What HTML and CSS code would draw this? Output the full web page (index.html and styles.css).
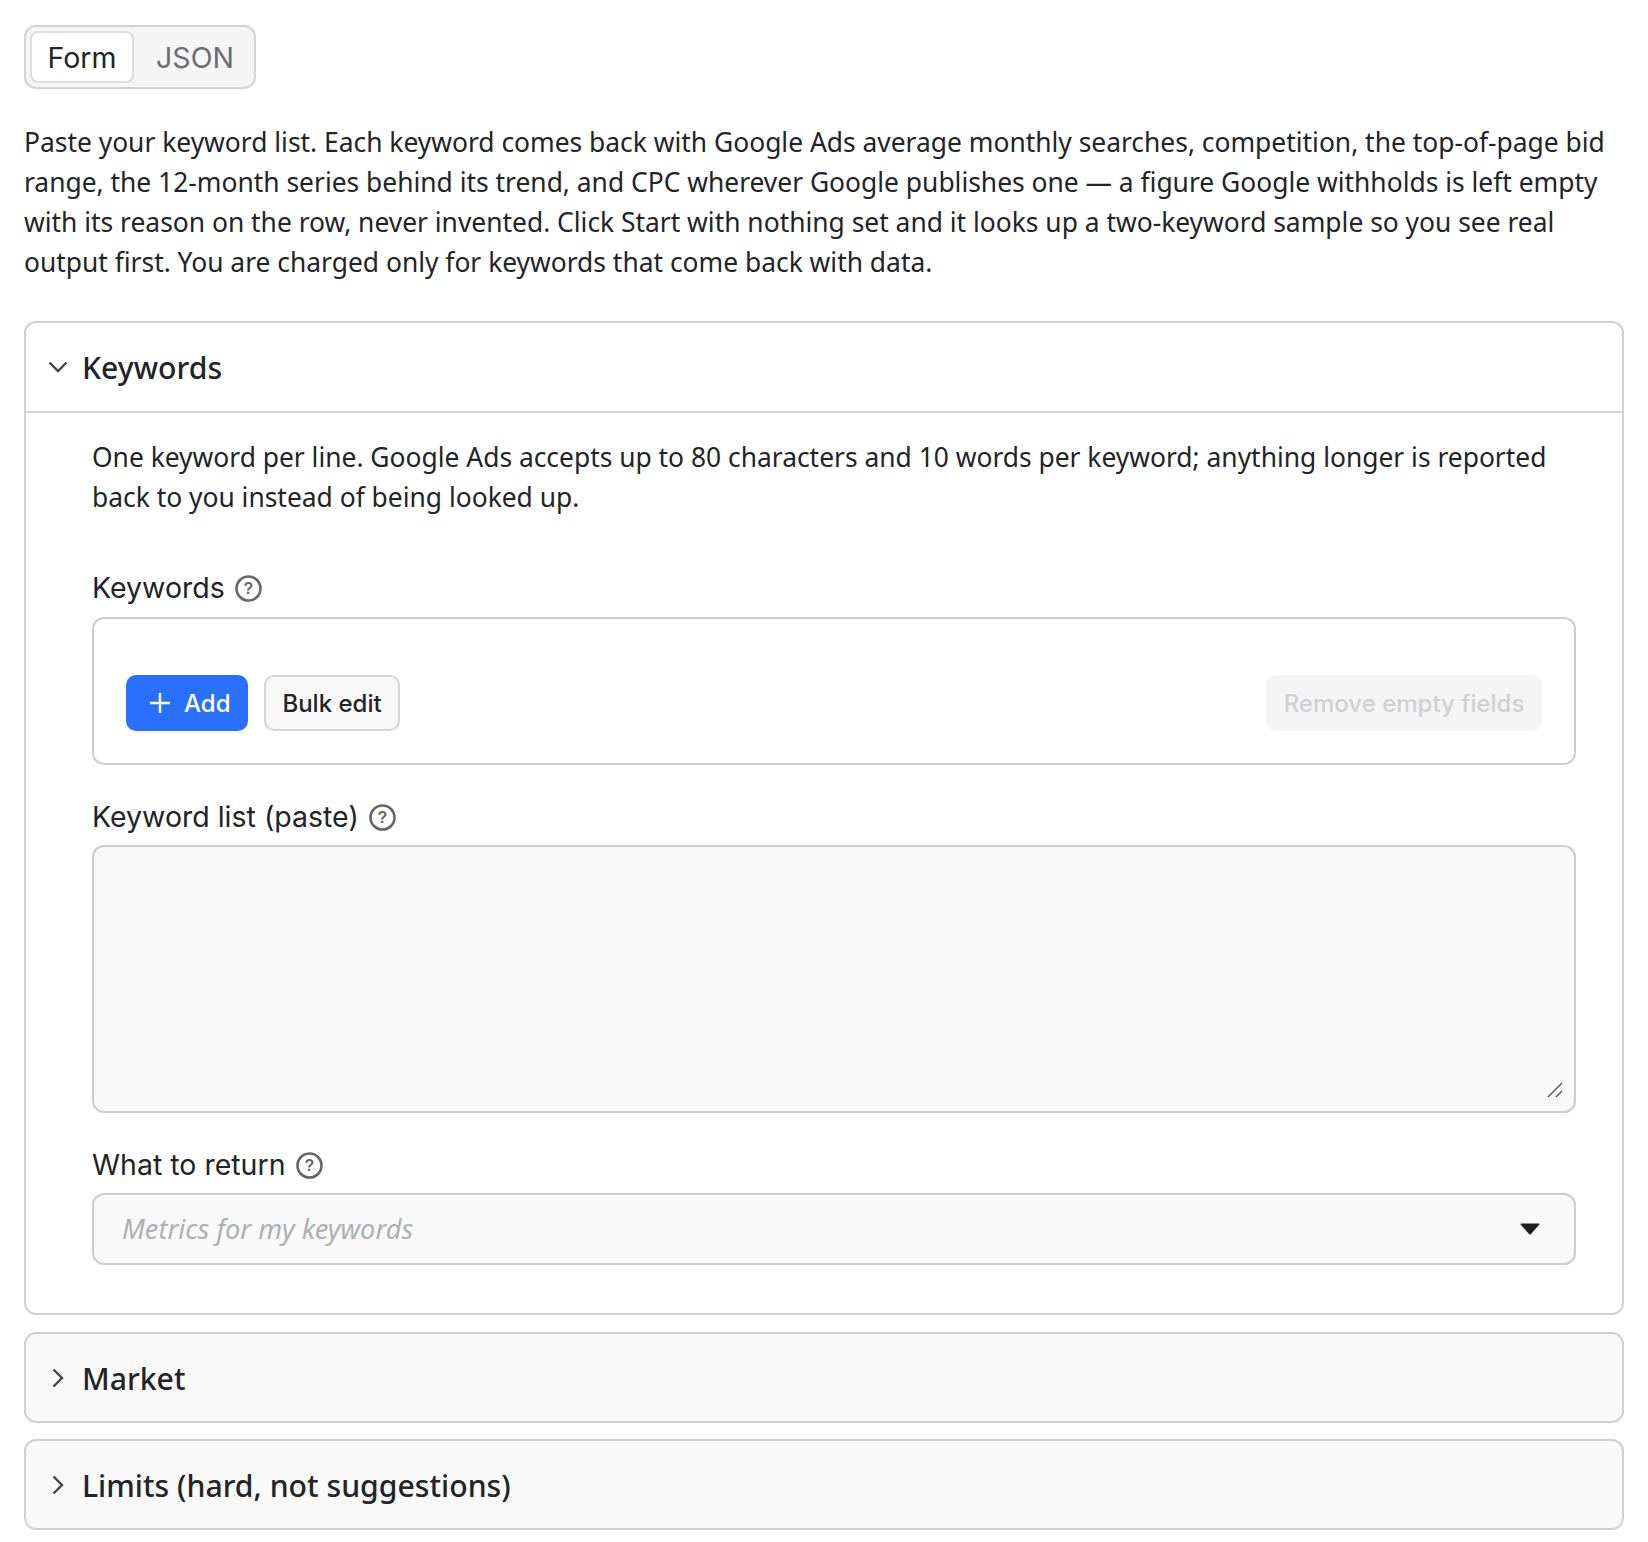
FILE: index.html
```html
<!DOCTYPE html>
<html lang="en">
<head>
<meta charset="utf-8">
<title>Keyword form</title>
<link rel="stylesheet" href="styles.css">
</head>
<body>
<main class="page">
  <div class="toggle">
    <button class="toggle-btn is-active">Form</button>
    <button class="toggle-btn">JSON</button>
  </div>
  <p class="intro">Paste your keyword list. Each keyword comes back with Google Ads average monthly searches, competition, the top-of-page bid range, the 12-month series behind its trend, and CPC wherever Google publishes one — a figure Google withholds is left empty with its reason on the row, never invented. Click Start with nothing set and it looks up a two-keyword sample so you see real output first. You are charged only for keywords that come back with data.</p>

  <section class="panel panel-open">
    <header class="panel-head panel-head-open">
      <svg class="chev" viewBox="0 0 20 12" width="20" height="12"><path d="M1.500 1.500 10 10l8.500-8.500" fill="none" stroke="#444" stroke-width="2.400"/></svg>
      <h2 class="panel-title">Keywords</h2>
    </header>
    <div class="panel-body">
      <p class="desc">One keyword per line. Google Ads accepts up to 80 characters and 10 words per keyword; anything longer is reported back to you instead of being looked up.</p>

      <div class="label label-first">Keywords
        <svg class="help" viewBox="0 0 27 27" width="27" height="27"><circle cx="13.500" cy="13.500" r="12" fill="none" stroke="#666" stroke-width="2.600"/><text x="13.500" y="19" text-anchor="middle" class="help-q">?</text></svg>
      </div>
      <div class="array-box">
        <button class="btn btn-primary"><svg viewBox="0 0 22 22" width="22" height="22"><path d="M11 1v20M1 11h20" stroke="#fff" stroke-width="2.400" fill="none"/></svg>Add</button>
        <button class="btn btn-ghost">Bulk edit</button>
        <button class="btn btn-disabled">Remove empty fields</button>
      </div>

      <div class="label">Keyword list (paste)
        <svg class="help" viewBox="0 0 27 27" width="27" height="27"><circle cx="13.500" cy="13.500" r="12" fill="none" stroke="#666" stroke-width="2.600"/><text x="13.500" y="19" text-anchor="middle" class="help-q">?</text></svg>
      </div>
      <div class="textarea">
        <svg class="grip" viewBox="0 0 16 16" width="16" height="16"><path d="M1 15 15 1M9 15 15 9" stroke="#555" stroke-width="1.400" fill="none"/></svg>
      </div>

      <div class="label">What to return
        <svg class="help" viewBox="0 0 27 27" width="27" height="27"><circle cx="13.500" cy="13.500" r="12" fill="none" stroke="#666" stroke-width="2.600"/><text x="13.500" y="19" text-anchor="middle" class="help-q">?</text></svg>
      </div>
      <div class="select">
        <span class="placeholder">Metrics for my keywords</span>
        <svg viewBox="0 0 20 12" width="20" height="12"><path d="M1 .5h18a.6.6 0 0 1 .4 1L11 11a1.400 1.400 0 0 1-2 0L.6 1.500a.6.6 0 0 1 .4-1z" fill="#1f1f1f"/></svg>
      </div>
    </div>
  </section>

  <section class="panel panel-closed">
    <header class="panel-head">
      <svg class="chev-r" viewBox="0 0 12 20" width="12" height="20"><path d="M1.500 1.500 10 10l-8.500 8.500" fill="none" stroke="#444" stroke-width="2.400"/></svg>
      <h2 class="panel-title">Market</h2>
    </header>
  </section>
  <section class="panel panel-closed">
    <header class="panel-head">
      <svg class="chev-r" viewBox="0 0 12 20" width="12" height="20"><path d="M1.500 1.500 10 10l-8.500 8.500" fill="none" stroke="#444" stroke-width="2.400"/></svg>
      <h2 class="panel-title">Limits (hard, not suggestions)</h2>
    </header>
  </section>
</main>
</body>
</html>
```
FILE: styles.css
```css
* { box-sizing: border-box; }
html, body { margin: 0; background: #fff; }
body { font-family: "Noto Sans", "Open Sans", sans-serif; color: #222426; font-size: 26.4px; line-height: 40px; }
.page { padding: 25px 24px 0; }

.toggle { display: inline-flex; align-items: center; width: 232px; height: 64px; padding: 4px; background: #f5f5f5; border: 2px solid #d3d3d3; border-radius: 12px; font-family: Inter, sans-serif; font-size: 28.5px; }
.toggle-btn { font: inherit; height: 52px; padding: 2px 0 0; border: 0; background: none; color: #6a6c6e; width: 110px; margin-left: 6px; }
.toggle-btn.is-active { width: 104px; margin-left: 0; padding: 2px 0 0; background: #fff; color: #222426; border: 2px solid #dcdcdc; border-radius: 8px; }

.intro { margin: 33px 0 39px; }

.panel { border: 2px solid #d0d0d0; border-radius: 12px; background: #fff; margin-bottom: 16px; overflow: hidden; }
.panel-open { margin-bottom: 17px; }
.panel-closed { background: #f9f9f9; }
.panel-head { display: flex; align-items: center; height: 87px; padding-left: 26px; }
.panel-head-open { height: 90px; padding-left: 22px; border-bottom: 2px solid #d0d0d0; }
.panel-title { margin: 0; padding-top: 2px; font-size: 30.2px; font-weight: 500; line-height: 40px; }
.chev { margin-right: 14px; flex: none; }
.chev-r { margin-right: 18px; flex: none; }

.panel-body { padding: 24px 46px 48px 66px; }
.desc { margin: 0; }

.label { display: flex; align-items: center; gap: 10px; font-family: Inter, sans-serif; font-size: 28.5px; height: 40px; margin: 32px 0 8px; }
.label-first { margin-top: 51px; margin-bottom: 9px; }
.help { flex: none; }
.help-q { font: 700 16px "Liberation Sans", sans-serif; fill: #666; }

.array-box { display: flex; align-items: center; gap: 16px; height: 148px; border: 2px solid #cdcdcd; border-radius: 12px; padding: 24px 32px 0; background: #fff; }
.btn { font-family: Inter, "Liberation Sans", sans-serif; font-size: 24px; font-weight: 500; height: 56px; border-radius: 10px; display: inline-flex; align-items: center; justify-content: center; padding: 0; }
.btn-primary { width: 122px; justify-content: flex-start; padding-left: 23px; background: #2970ff; color: #fff; border: 0; gap: 13px; }
.btn-ghost { width: 136px; background: #f9f9f9; color: #222426; border: 2px solid #d5d5d5; }
.btn-disabled { width: 276px; margin-left: auto; background: #f4f4f5; color: #cfd0d2; border: 0; }

.textarea { position: relative; height: 268px; background: #f9f9f9; border: 2px solid #cdcdcd; border-radius: 12px; }
.grip { position: absolute; right: 11px; bottom: 13px; }

.select { display: flex; align-items: center; justify-content: space-between; height: 72px; background: #f9f9f9; border: 2px solid #cdcdcd; border-radius: 12px; padding: 0 34px 0 28px; }
.placeholder { color: #aeb0b2; font-style: italic; font-size: 27.2px; }
```
